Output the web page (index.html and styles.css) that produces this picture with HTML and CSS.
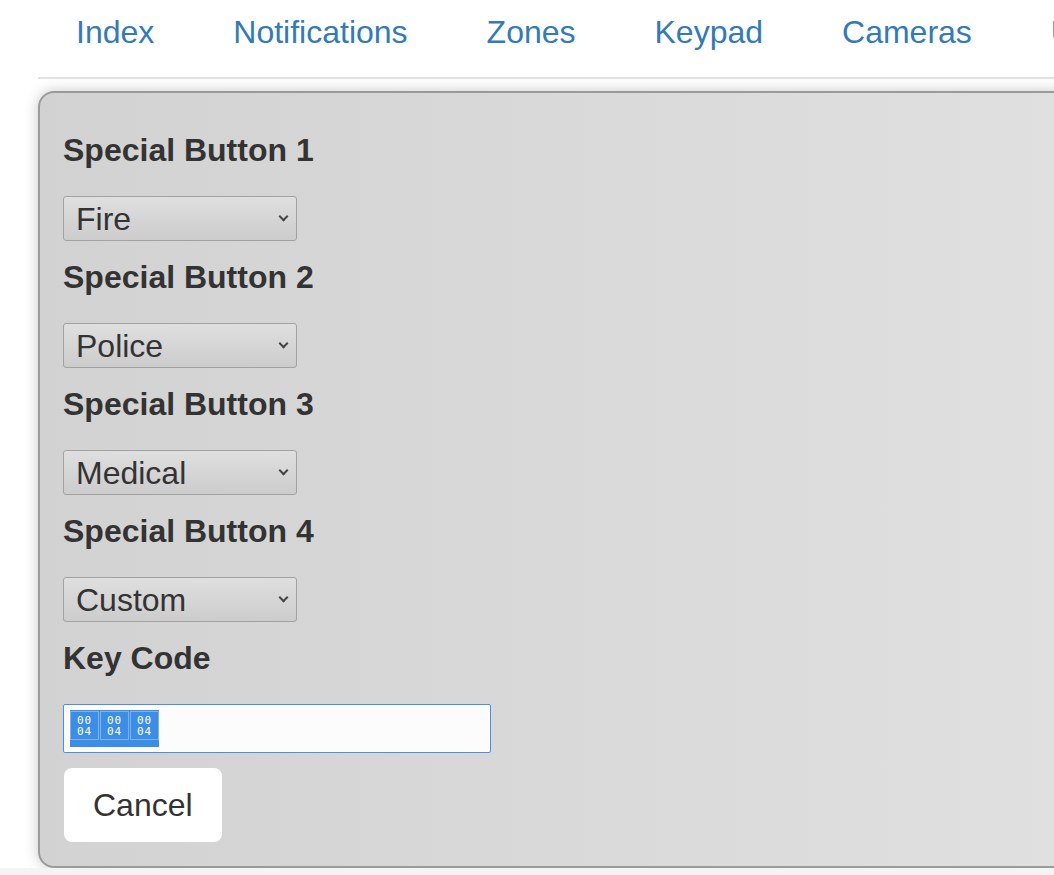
FILE: index.html
```html
<!DOCTYPE html>
<html lang="en">
<head>
    <meta charset="UTF-8">
    <meta name="viewport" content="width=device-width, initial-scale=1.0">
    <title>Keypad</title>
    <link rel="stylesheet" href="styles.css">
</head>
<body>
    <div class="page">
        <ul class="nav">
            <li><a href="#">Index</a></li>
            <li><a href="#">Notifications</a></li>
            <li><a href="#">Zones</a></li>
            <li><a href="#">Keypad</a></li>
            <li><a href="#">Cameras</a></li>
            <li><a href="#">Users</a></li>
        </ul>

        <div class="panel">
            <label class="field-label" for="sb1">Special Button 1</label>
            <div class="select-wrap">
                <select id="sb1">
                    <option selected>Fire</option>
                    <option>Police</option>
                    <option>Medical</option>
                    <option>Custom</option>
                </select>
            </div>

            <label class="field-label" for="sb2">Special Button 2</label>
            <div class="select-wrap">
                <select id="sb2">
                    <option>Fire</option>
                    <option selected>Police</option>
                    <option>Medical</option>
                    <option>Custom</option>
                </select>
            </div>

            <label class="field-label" for="sb3">Special Button 3</label>
            <div class="select-wrap">
                <select id="sb3">
                    <option>Fire</option>
                    <option>Police</option>
                    <option selected>Medical</option>
                    <option>Custom</option>
                </select>
            </div>

            <label class="field-label" for="sb4">Special Button 4</label>
            <div class="select-wrap">
                <select id="sb4">
                    <option>Fire</option>
                    <option>Police</option>
                    <option>Medical</option>
                    <option selected>Custom</option>
                </select>
            </div>

            <div class="field-label">Key Code</div>
            <div class="keycode">
                <!-- unprintable key bytes show up as hex boxes, all selected -->
                <span class="selection">
                    <span class="hexbox">00<br>04</span>
                    <span class="hexbox">00<br>04</span>
                    <span class="hexbox">00<br>04</span>
                </span>
            </div>

            <button class="btn-cancel">Cancel</button>
        </div>
    </div>
</body>
</html>
```

FILE: styles.css
```css
html {
    background-color: #f4f4f4;
}
body {
    margin: 0;
    font-family: "Liberation Sans", Arial, sans-serif;
    color: #333;
}
.page {
    background-color: #fff;
    overflow: hidden;
}
.nav {
    display: flex;
    list-style: none;
    margin: 0 0 0 38px;
    padding: 0;
    border-bottom: 2px solid #e2e2e2;
    white-space: nowrap;
}
.nav a {
    display: block;
    padding: 14px 41px 27px 38px;
    font-size: 32px;
    line-height: 36px;
    color: #337ab7;
    text-decoration: none;
}
.panel {
    margin: 12px -40px 0 38px;
    padding: 21px 23px 24px;
    border: 2px solid #9a9a9a;
    border-radius: 16px;
    background: linear-gradient(to right, #d2d2d2, #e0e0e0);
    box-shadow: 0 0 14px rgba(0,0,0,0.22);
}
.field-label {
    display: block;
    margin: 17.5px 0 28.5px;
    font-size: 32px;
    font-weight: bold;
    line-height: 36px;
    color: #333;
}
.select-wrap {
    position: relative;
    width: 234px;
}
.select-wrap::after {
    content: "";
    position: absolute;
    right: 10px;
    top: 17px;
    width: 5px;
    height: 5px;
    border-right: 2px solid #444;
    border-bottom: 2px solid #444;
    transform: rotate(45deg);
    pointer-events: none;
}
select {
    display: block;
    width: 234px;
    height: 45px;
    box-sizing: border-box;
    padding: 0 30px 0 12px;
    -webkit-appearance: none;
    appearance: none;
    font-family: inherit;
    font-size: 32px;
    color: #333;
    border: 1px solid #a2a2a2;
    border-radius: 3px;
    background: linear-gradient(to bottom, #dfdfdf, #cccccc);
}
.keycode {
    display: flex;
    align-items: flex-start;
    width: 428px;
    height: 49px;
    box-sizing: border-box;
    padding: 5px 6px;
    border: 1px solid #4a90e2;
    border-radius: 2px;
    background-color: #fcfcfc;
}
.selection {
    display: flex;
    gap: 1px;
    height: 37px;
    padding-top: 1px;
    box-sizing: border-box;
    background-color: #3c8de6;
}
.hexbox {
    display: flex;
    align-items: center;
    justify-content: center;
    width: 29px;
    height: 29px;
    box-sizing: border-box;
    border: 1px solid #7db2f0;
    font-family: "DejaVu Sans Mono", monospace;
    font-size: 11px;
    line-height: 11px;
    letter-spacing: 1px;
    text-align: center;
    color: #fff;
}
.btn-cancel {
    display: block;
    margin: 15px 0 0 1px;
    padding: 19px 29px;
    font-family: inherit;
    font-size: 32px;
    line-height: 36px;
    color: #333;
    background-color: #fff;
    border: none;
    border-radius: 8px;
    cursor: pointer;
}
```
